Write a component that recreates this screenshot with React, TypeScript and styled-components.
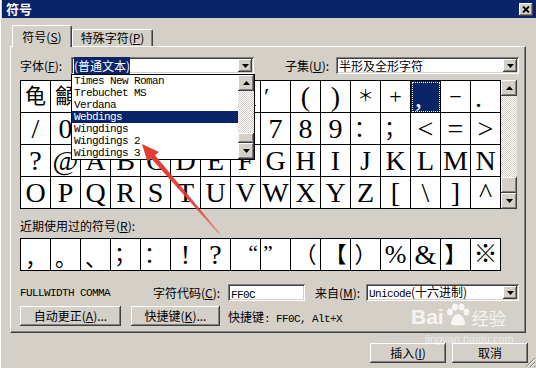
import styled, { createGlobalStyle, css } from "styled-components";

const CJK = `"Noto Sans CJK SC", "DejaVu Sans", sans-serif`;
const MONO = `"Liberation Mono", "Noto Sans CJK SC", monospace`;
const SERIF = `"Liberation Serif", "Noto Sans CJK SC", serif`;

const GlobalStyle = createGlobalStyle`
  html, body { margin: 0; padding: 0; }
  body {
    background: #d4d0c8;
    font-family: ${CJK};
    font-size: 12px;
    color: #000;
  }
`;

const raised = css`
  background: #d4d0c8;
  box-shadow: inset -1px -1px #404040, inset 1px 1px #ffffff,
    inset -2px -2px #808080, inset 2px 2px #d4d0c8;
`;

const sunken = css`
  background: #ffffff;
  box-shadow: inset 1px 1px #808080, inset -1px -1px #ffffff,
    inset 2px 2px #404040, inset -2px -2px #d4d0c8;
`;

type Pos = "c" | "bl" | "l" | "r" | "tl";
type G = { ch: string; pos: Pos; size?: number; sel?: boolean };
const g = (ch: string, pos: Pos = "c", size?: number): G => ({ ch, pos, size });

const gridRows: G[][] = [
  [
    g("龟", "c", 21), g("龥", "c", 21), g("!"), g('"'), g("#"), g("$"), g("%"), g("&"),
    g("′", "l", 24), g("("), g(")"), g("＊", "c", 16), g("+", "c", 22),
    { ch: ",", pos: "bl", sel: true }, g("−", "c", 22), g(".", "bl"),
  ],
  [
    g("/"), g("0"), g("1"), g("2"), g("3"), g("4"), g("5"), g("6"), g("7"), g("8"), g("9"),
    g("：", "l", 22), g("；", "l", 22), g("<"), g("="), g(">"),
  ],
  "?@ABCDEFGHIJKLMN".split("").map((c) => g(c)),
  "OPQRSTUVWXYZ[\\]^".split("").map((c) => g(c)),
];

const recent: G[] = [
  g("，", "bl", 22), g("。", "bl", 22), g("、", "bl", 22), g("；", "l", 22), g("：", "l", 22),
  g("!"), g("?"), g("“", "r", 22), g("”", "tl", 22), g("（", "c", 22), g("【", "c", 22),
  g("）", "c", 22), g("%", "c", 26), g("&", "c", 28), g("】", "c", 22), g("※", "c", 24),
];

const fonts = [
  "Times New Roman",
  "Trebuchet MS",
  "Verdana",
  "Webdings",
  "Wingdings",
  "Wingdings 2",
  "Wingdings 3",
];

function Tri({ up }: { up?: boolean }) {
  return (
    <svg width="7" height="4" viewBox="0 0 7 4">
      <polygon points={up ? "3.5,0 7,4 0,4" : "0,0 7,0 3.5,4"} fill="#000" />
    </svg>
  );
}

export default function App() {
  return (
    <>
      <GlobalStyle />
      <Window>
        <TitleBar>
          <Title>符号</Title>
          <CloseBtn>
            <svg width="8" height="7" viewBox="0 0 8 7">
              <path d="M1 0.5 L7 6.5 M7 0.5 L1 6.5" stroke="#000" strokeWidth="1.8" />
            </svg>
          </CloseBtn>
        </TitleBar>

        <Content>
          <TabStrip>
            <Tab $active $w={60}>
              符号(<U>S</U>)
            </Tab>
            <Tab $w={81}>
              特殊字符(<U>P</U>)
            </Tab>
          </TabStrip>

          <Panel>
            <FieldRow>
              <FieldGroup>
                <Label $w={51}>
                  字体(<U>F</U>):
                </Label>
                <ComboBox $w={183}>
                  <ComboText>
                    <Selected>(普通文本)</Selected>
                  </ComboText>
                  <DropBtn>
                    <Tri />
                  </DropBtn>
                </ComboBox>
              </FieldGroup>
              <FieldGroup>
                <Label $w={51}>
                  子集(<U>U</U>):
                </Label>
                <ComboBox $w={183}>
                  <ComboText>半形及全形字符</ComboText>
                  <DropBtn>
                    <Tri />
                  </DropBtn>
                </ComboBox>
              </FieldGroup>
            </FieldRow>

            <GridWrap>
              <CharGrid>
                {gridRows.flat().map((c, i) => (
                  <Cell key={i} $pos={c.pos} $size={c.size} $sel={c.sel}>
                    {c.ch}
                  </Cell>
                ))}
              </CharGrid>
              <VScroll $h={129}>
                <ScrollBtn>
                  <Tri up />
                </ScrollBtn>
                <Track />
                <Thumb $h={16} />
                <ScrollBtn>
                  <Tri />
                </ScrollBtn>
              </VScroll>
            </GridWrap>

            <RecentLabel>
              近期使用过的符号(<U>R</U>):
            </RecentLabel>
            <CharGrid $recent>
              {recent.map((c, i) => (
                <Cell key={i} $pos={c.pos} $size={c.size}>
                  {c.ch}
                </Cell>
              ))}
            </CharGrid>

            <InfoRow>
              <CharName>FULLWIDTH COMMA</CharName>
              <Label $w={75}>
                字符代码(<U>C</U>):
              </Label>
              <TextBox $w={77}>
                <Mono>FF0C</Mono>
              </TextBox>
              <Label $w={51} style={{ marginLeft: 10 }}>
                来自(<U>M</U>):
              </Label>
              <ComboBox $w={153}>
                <ComboText>
                  <Mono>Unicode</Mono>(十六进制)
                </ComboText>
                <DropBtn>
                  <Tri />
                </DropBtn>
              </ComboBox>
            </InfoRow>

            <ButtonRow>
              <Button $w={101}>
                自动更正(<U>A</U>)...
              </Button>
              <Button $w={89}>
                快捷键(<U>K</U>)...
              </Button>
              <Shortcut>
                快捷键<Mono>: FF0C, Alt+X</Mono>
              </Shortcut>
            </ButtonRow>

            <ListBox>
              <ListItems>
                {fonts.map((f) => (
                  <ListItem key={f} $sel={f === "Webdings"}>
                    {f}
                  </ListItem>
                ))}
              </ListItems>
              <VScroll $h={84}>
                <ScrollBtn>
                  <Tri up />
                </ScrollBtn>
                <Track />
                <Thumb $h={10} />
                <ScrollBtn>
                  <Tri />
                </ScrollBtn>
              </VScroll>
            </ListBox>
          </Panel>

          <BottomBar>
            <Button $w={76}>
              插入(<U>I</U>)
            </Button>
            <Button $w={76}>取消</Button>
          </BottomBar>
        </Content>

        <Watermark>
          <WmLogo>
            Bai
            <svg width="26" height="24" viewBox="0 0 26 24">
              <ellipse cx="5" cy="9" rx="3" ry="3.6" fill="currentColor" />
              <ellipse cx="10" cy="4" rx="3" ry="3.6" fill="currentColor" />
              <ellipse cx="16.5" cy="4" rx="3" ry="3.6" fill="currentColor" />
              <ellipse cx="21.5" cy="9" rx="3" ry="3.6" fill="currentColor" />
              <path d="M6 21 C6 15 10 11 13 11 C16 11 20 15 20 21 C20 23 6 23 6 21 Z" fill="currentColor" />
            </svg>
            <WmCn>经验</WmCn>
          </WmLogo>
          <WmSite>jingyan.baidu.com</WmSite>
        </Watermark>

        <Overlay width="536" height="368" viewBox="0 0 536 368">
          <defs>
            <linearGradient id="arrowFade" x1="142" y1="144" x2="219" y2="233" gradientUnits="userSpaceOnUse">
              <stop offset="0" stopColor="#e3392f" stopOpacity="1" />
              <stop offset="0.7" stopColor="#e3392f" stopOpacity="0.9" />
              <stop offset="1" stopColor="#e3392f" stopOpacity="0.35" />
            </linearGradient>
          </defs>
          <polygon
            points="142,144 147.4,161.8 151.2,158.5 218.5,233.8 219.7,232.8 155,155.3 158.8,152"
            fill="url(#arrowFade)"
          />
        </Overlay>

        <Grip width="12" height="12" viewBox="0 0 12 12">
          <path d="M11 2 L2 11 M11 6 L6 11 M11 10 L10 11" stroke="#808080" strokeWidth="1" />
          <path d="M11 3 L3 11 M11 7 L7 11" stroke="#ffffff" strokeWidth="1" />
        </Grip>
      </Window>
    </>
  );
}

const Window = styled.div`
  position: relative;
  width: 536px;
  height: 368px;
  box-sizing: border-box;
  padding-left: 2px;
  overflow: hidden;
  background: #d4d0c8;
  box-shadow: inset 1px 0 #ffffff;
`;

const TitleBar = styled.div`
  height: 18px;
  background: #0a246a;
  display: flex;
  align-items: center;
  justify-content: space-between;
  padding: 0 3px 0 4px;
`;

const Title = styled.span`
  color: #fff;
  font-weight: bold;
  font-size: 13px;
  line-height: 18px;
`;

const CloseBtn = styled.div`
  ${raised};
  width: 14px;
  height: 13px;
  display: flex;
  align-items: center;
  justify-content: center;
`;

const Content = styled.div`
  padding: 7px 10px 0 8px;
`;

const U = styled.span`
  text-decoration: underline;
`;

const Mono = styled.span`
  font-family: ${MONO};
  font-size: 11px;
  letter-spacing: -0.6px;
`;

const TabStrip = styled.div`
  display: flex;
  align-items: flex-end;
  height: 21px;
  padding-left: 2px;
  position: relative;
  z-index: 1;
`;

const Tab = styled.div<{ $active?: boolean; $w: number }>`
  width: ${(p) => p.$w}px;
  height: ${(p) => (p.$active ? 22 : 17)}px;
  margin-bottom: ${(p) => (p.$active ? -1 : 0)}px;
  box-sizing: border-box;
  background: #d4d0c8;
  border-top: 1px solid #fff;
  border-left: 1px solid #fff;
  border-right: 1px solid #404040;
  box-shadow: inset -1px 0 #808080;
  border-radius: 2px 2px 0 0;
  display: flex;
  align-items: center;
  justify-content: center;
  line-height: 14px;
  white-space: nowrap;
`;

const Panel = styled.div`
  position: relative;
  height: 287px;
  box-sizing: border-box;
  border-top: 1px solid #fff;
  border-left: 1px solid #fff;
  border-right: 1px solid #404040;
  border-bottom: 1px solid #404040;
  box-shadow: inset -1px -1px #808080;
  padding: 10px 6px 0 9px;
  display: flex;
  flex-direction: column;
`;

const FieldRow = styled.div`
  display: flex;
  align-items: center;
  justify-content: space-between;
  height: 17px;
`;

const FieldGroup = styled.div`
  display: flex;
  align-items: center;
`;

const Label = styled.span<{ $w: number }>`
  width: ${(p) => p.$w}px;
  flex: none;
  white-space: nowrap;
  line-height: 17px;
`;

const ComboBox = styled.div<{ $w: number }>`
  ${sunken};
  width: ${(p) => p.$w}px;
  height: 17px;
  box-sizing: border-box;
  padding: 2px;
  display: flex;
  align-items: center;
`;

const ComboText = styled.span`
  flex: 1;
  min-width: 0;
  white-space: nowrap;
  line-height: 13px;
  padding-left: 1px;
`;

const Selected = styled.span`
  background: #0a246a;
  color: #fff;
`;

const DropBtn = styled.div`
  ${raised};
  width: 14px;
  height: 13px;
  flex: none;
  display: flex;
  align-items: center;
  justify-content: center;
`;

const TextBox = styled.div<{ $w: number }>`
  ${sunken};
  width: ${(p) => p.$w}px;
  height: 17px;
  box-sizing: border-box;
  padding: 0 3px;
  line-height: 17px;
`;

const GridWrap = styled.div`
  display: flex;
  margin-top: 6px;
`;

const CharGrid = styled.div<{ $recent?: boolean }>`
  display: grid;
  grid-template-columns: repeat(16, 30px);
  grid-auto-rows: 32px;
  width: fit-content;
  border-top: 1px solid #000;
  border-left: 1px solid #000;
  background: #fff;
  margin-top: ${(p) => (p.$recent ? 5 : 0)}px;
`;

const cellPos: Record<Pos, ReturnType<typeof css>> = {
  c: css`
    justify-content: center;
    align-items: center;
  `,
  bl: css`
    justify-content: flex-start;
    align-items: flex-end;
    padding-left: 4px;
  `,
  l: css`
    justify-content: flex-start;
    align-items: center;
    padding-left: 3px;
  `,
  r: css`
    justify-content: flex-end;
    align-items: flex-start;
    padding: 2px 2px 0 0;
  `,
  tl: css`
    justify-content: flex-start;
    align-items: flex-start;
    padding: 2px 0 0 2px;
  `,
};

const Cell = styled.div<{ $pos: Pos; $size?: number; $sel?: boolean }>`
  box-sizing: border-box;
  border-right: 1px solid #000;
  border-bottom: 1px solid #000;
  display: flex;
  overflow: hidden;
  font-family: ${SERIF};
  font-size: ${(p) => p.$size ?? 28}px;
  line-height: 1.05;
  ${(p) => cellPos[p.$pos]};
  ${(p) =>
    p.$sel &&
    css`
      background: #0a246a;
      color: #fff;
      outline: 1px dotted #fff;
      outline-offset: -2px;
    `}
`;

const VScroll = styled.div<{ $h: number }>`
  width: 16px;
  height: ${(p) => p.$h}px;
  flex: none;
  display: flex;
  flex-direction: column;
`;

const ScrollBtn = styled.div`
  ${raised};
  height: 16px;
  flex: none;
  display: flex;
  align-items: center;
  justify-content: center;
`;

const Track = styled.div`
  flex: 1;
  background: repeating-conic-gradient(#d4d0c8 0% 25%, #ffffff 0% 50%) 0 0 / 2px 2px;
`;

const Thumb = styled.div<{ $h: number }>`
  ${raised};
  height: ${(p) => p.$h}px;
  flex: none;
`;

const RecentLabel = styled.div`
  margin-top: 10px;
  line-height: 14px;
`;

const InfoRow = styled.div`
  display: flex;
  align-items: center;
  height: 17px;
  margin-top: 13px;
`;

const CharName = styled.span`
  width: 133px;
  flex: none;
  font-family: ${MONO};
  font-size: 11px;
  letter-spacing: -0.6px;
`;

const ButtonRow = styled.div`
  display: flex;
  align-items: center;
  gap: 10px;
  height: 20px;
  margin-top: 5px;
`;

const Button = styled.div<{ $w: number }>`
  ${raised};
  width: ${(p) => p.$w}px;
  height: 20px;
  box-sizing: border-box;
  display: flex;
  align-items: center;
  justify-content: center;
  white-space: nowrap;
  line-height: 14px;
`;

const Shortcut = styled.span`
  margin-left: -2px;
  white-space: nowrap;
`;

const BottomBar = styled.div`
  display: flex;
  justify-content: flex-end;
  gap: 6px;
  margin-top: 10px;
  margin-right: -2px;
`;

const ListBox = styled.div`
  position: absolute;
  left: 60px;
  top: 27px;
  width: 184px;
  height: 86px;
  box-sizing: border-box;
  border: 1px solid #000;
  background: #fff;
  display: flex;
  z-index: 2;
`;

const ListItems = styled.div`
  flex: 1;
  overflow: hidden;
`;

const ListItem = styled.div<{ $sel?: boolean }>`
  height: 12px;
  line-height: 12px;
  padding-left: 2px;
  font-family: ${MONO};
  font-size: 11px;
  letter-spacing: -0.6px;
  white-space: nowrap;
  background: ${(p) => (p.$sel ? "#0a246a" : "transparent")};
  color: ${(p) => (p.$sel ? "#fff" : "#000")};
`;

const Watermark = styled.div`
  position: absolute;
  left: 411px;
  top: 303px;
  color: rgba(255, 255, 255, 0.8);
  pointer-events: none;
  z-index: 4;
`;

const WmLogo = styled.div`
  display: flex;
  align-items: flex-end;
  gap: 1px;
  font-family: "Liberation Sans", sans-serif;
  font-weight: bold;
  font-size: 21px;
  line-height: 20px;
`;

const WmCn = styled.span`
  font-family: ${CJK};
  font-size: 17px;
  font-weight: normal;
  line-height: 18px;
`;

const WmSite = styled.div`
  font-family: "Liberation Sans", sans-serif;
  font-size: 11px;
  margin: 6px 0 0 14px;
  color: rgba(255, 255, 255, 0.55);
`;

const Overlay = styled.svg`
  position: absolute;
  left: 0;
  top: 0;
  pointer-events: none;
  z-index: 5;
`;

const Grip = styled.svg`
  position: absolute;
  right: 0;
  bottom: 0;
`;
